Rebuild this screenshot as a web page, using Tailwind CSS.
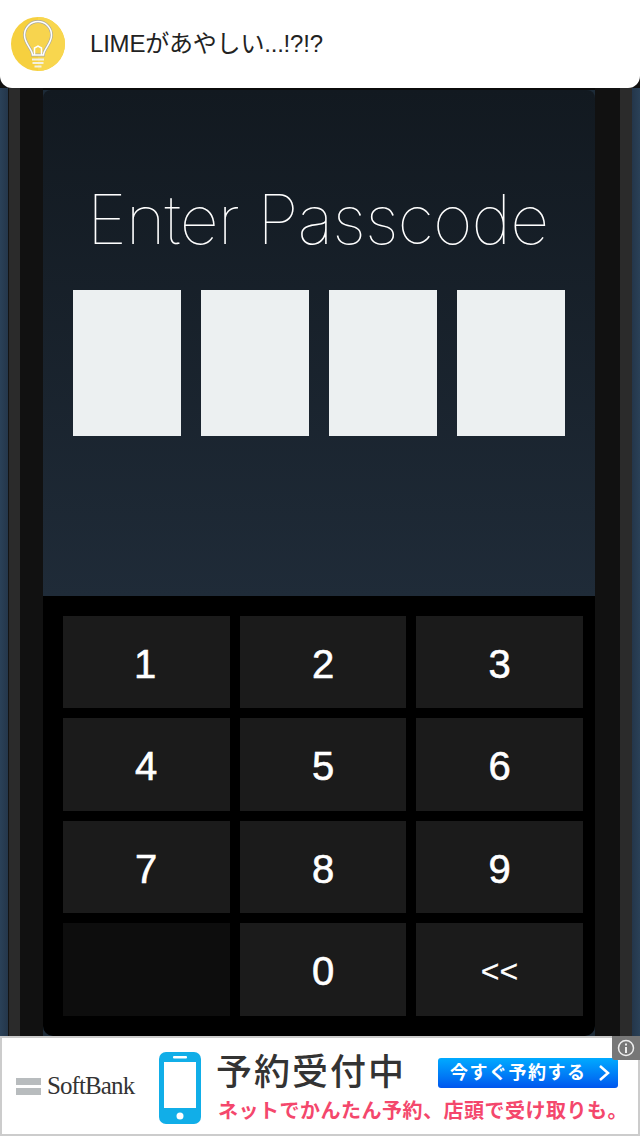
<!DOCTYPE html>
<html lang="ja">
<head>
<meta charset="UTF-8">
<meta name="viewport" content="width=device-width, initial-scale=1.0">
<script src="https://cdn.jsdelivr.net/npm/@tailwindcss/browser@4"></script>
<title>Enter Passcode</title>
</head>
<body class="w-[640px] h-[1136px] overflow-hidden bg-[#111] font-['Liberation_Sans','Noto_Sans_CJK_JP',sans-serif]">

<!-- top bar -->
<header class="h-[88px] flex items-center bg-white rounded-b-[12px] pl-[11px]">
    <svg class="w-[54px] h-[54px] shrink-0" viewBox="0 0 54 54">
        <circle cx="27" cy="27" r="27" fill="#f6d03f"/>
        <path d="M27 0a27 27 0 0 1 0 54z" fill="#f8d64e"/>
        <path d="M21.500 38c0-6-8-11-8-20a13.500 13.500 0 0 1 27 0c0 9-8 14-8 20z" fill="#f7d44e" stroke="#a9a9a0" stroke-width="2.800"/>
        <path d="M21.500 38c0-6-8-11-8-20a13.500 13.500 0 0 1 27 0c0 9-8 14-8 20z" fill="none" stroke="#fff" stroke-width="1.500"/>
        <path d="M23.500 38v-7l3.500-2 3.500 2v7" fill="none" stroke="#fff" stroke-width="1.500"/>
        <path d="M21 42.500h12M21.500 46h11M23.500 49.500h7" fill="none" stroke="#f4f1e0" stroke-width="2"/>
    </svg>
    <p class="ml-[25px] text-[24px] leading-none text-[#222] tracking-[-0.2px]">LIMEがあやしい...!?!?</p>
</header>

<!-- frame + screen -->
<div class="flex h-[948px]">
    <div class="w-[8px] bg-gradient-to-r from-[#2a4158] to-[#24364a]"></div>
    <div class="w-[1px] bg-[#141414]"></div>
    <div class="w-[11px] bg-[#2b2b2b]"></div>
    <div class="w-[23px] bg-[#111]"></div>

    <div class="w-[552px] flex flex-col bg-[#1d2b38]">
        <div class="h-[2px] bg-[#0b0b0b]"></div>
        <section class="h-[506px] flex flex-col rounded-t-[8px] bg-gradient-to-b from-[#121920] to-[#1f2b38]">
            <h1 class="mt-[92px] h-[74px] pl-[44px] whitespace-nowrap text-[68px] leading-[74px] font-['Inter'] font-thin tracking-[-0.9px] text-white">Enter Passcode</h1>
            <div class="mt-[34px] flex gap-[20px] pl-[30px]">
                <div class="w-[108px] h-[146px] bg-[#ecf0f1]"></div>
                <div class="w-[108px] h-[146px] bg-[#ecf0f1]"></div>
                <div class="w-[108px] h-[146px] bg-[#ecf0f1]"></div>
                <div class="w-[108px] h-[146px] bg-[#ecf0f1]"></div>
            </div>
        </section>
        <section class="flex-1 pt-[20px] pl-[20px] grid grid-cols-[167px_166px_167px] grid-rows-[92px_93px_92px_93px] gap-[10px] content-start bg-black rounded-b-[10px] text-white text-[40px] [-webkit-text-stroke:0.6px_white]">
            <button class="pt-[3px] pr-[3px] bg-[#1b1b1b]">1</button>
            <button class="pt-[3px] bg-[#1b1b1b]">2</button>
            <button class="pt-[3px] bg-[#1b1b1b]">3</button>
            <button class="pt-[3px] pr-[1px] bg-[#1b1b1b]">4</button>
            <button class="pt-[3px] bg-[#1b1b1b]">5</button>
            <button class="pt-[3px] bg-[#1b1b1b]">6</button>
            <button class="pt-[3px] pr-[1px] bg-[#1b1b1b]">7</button>
            <button class="pt-[3px] bg-[#1b1b1b]">8</button>
            <button class="pt-[3px] bg-[#1b1b1b]">9</button>
            <button class="bg-[#0d0d0d]"></button>
            <button class="pt-[3px] bg-[#1b1b1b]">0</button>
            <button class="pt-[3px] bg-[#1b1b1b] text-[32px] [-webkit-text-stroke:0.2px_white]">&lt;&lt;</button>
        </section>
    </div>

    <div class="w-[25px] bg-[#111]"></div>
    <div class="w-[12px] bg-[#2b2b2b]"></div>
    <div class="w-[8px] bg-gradient-to-r from-[#24364a] to-[#2a4158]"></div>
</div>

<!-- ad banner -->
<footer class="relative h-[100px] flex items-center bg-white border-2 border-[#ccc] pl-[14px]">
    <div class="flex flex-col gap-[3px] w-[25px]">
        <div class="h-[7px] bg-[#b8bcbe]"></div>
        <div class="h-[7px] bg-[#b8bcbe]"></div>
    </div>
    <span class="ml-[6px] w-[91px] whitespace-nowrap text-[25px] font-['Liberation_Serif'] text-[#333] tracking-[-0.9px]">SoftBank</span>
    <svg class="ml-[21px] mt-[4px] w-[42px] h-[72px] shrink-0" viewBox="0 0 42 72">
        <rect width="42" height="72" rx="7" fill="#11aee8"/>
        <rect x="5" y="10" width="32" height="46" fill="#fff"/>
        <rect x="14" y="4" width="14" height="2.500" rx="1" fill="#fff"/>
        <circle cx="21" cy="64" r="3.500" fill="#fff"/>
    </svg>
    <div class="ml-[15px] mt-[2px] w-[410px] flex flex-col">
        <div class="flex items-center h-[46px]">
            <span class="w-[222px] text-[36px] leading-none tracking-[2px] font-medium text-[#333]">予約受付中</span>
            <span class="h-[30px] w-[180px] flex items-center justify-between pl-[12px] pr-[8px] rounded-[3px] bg-gradient-to-b from-[#00aaff] to-[#0055ee] text-white text-[18px] font-bold tracking-[1.5px]">今すぐ予約する
                <svg class="w-[12px] h-[18px]" viewBox="0 0 12 18"><path d="M2 2l8 7-8 7" fill="none" stroke="#fff" stroke-width="2.500"/></svg>
            </span>
        </div>
        <p class="mt-[2px] ml-[2px] whitespace-nowrap text-[20px] leading-[26px] font-bold tracking-[0.5px] text-[#f4476c]">ネットでかんたん予約、店頭で受け取りも。</p>
    </div>
    <div class="absolute -top-[2px] -right-[2px] w-[28px] h-[24px] flex items-center justify-center bg-[#777] rounded-bl-[3px]">
        <svg class="w-[18px] h-[18px]" viewBox="0 0 18 18">
            <circle cx="9" cy="9" r="7.500" fill="none" stroke="#eee" stroke-width="1.500"/>
            <rect x="8" y="8" width="2" height="6" fill="#eee"/>
            <rect x="8" y="4.500" width="2" height="2" fill="#eee"/>
        </svg>
    </div>
</footer>

</body>
</html>
